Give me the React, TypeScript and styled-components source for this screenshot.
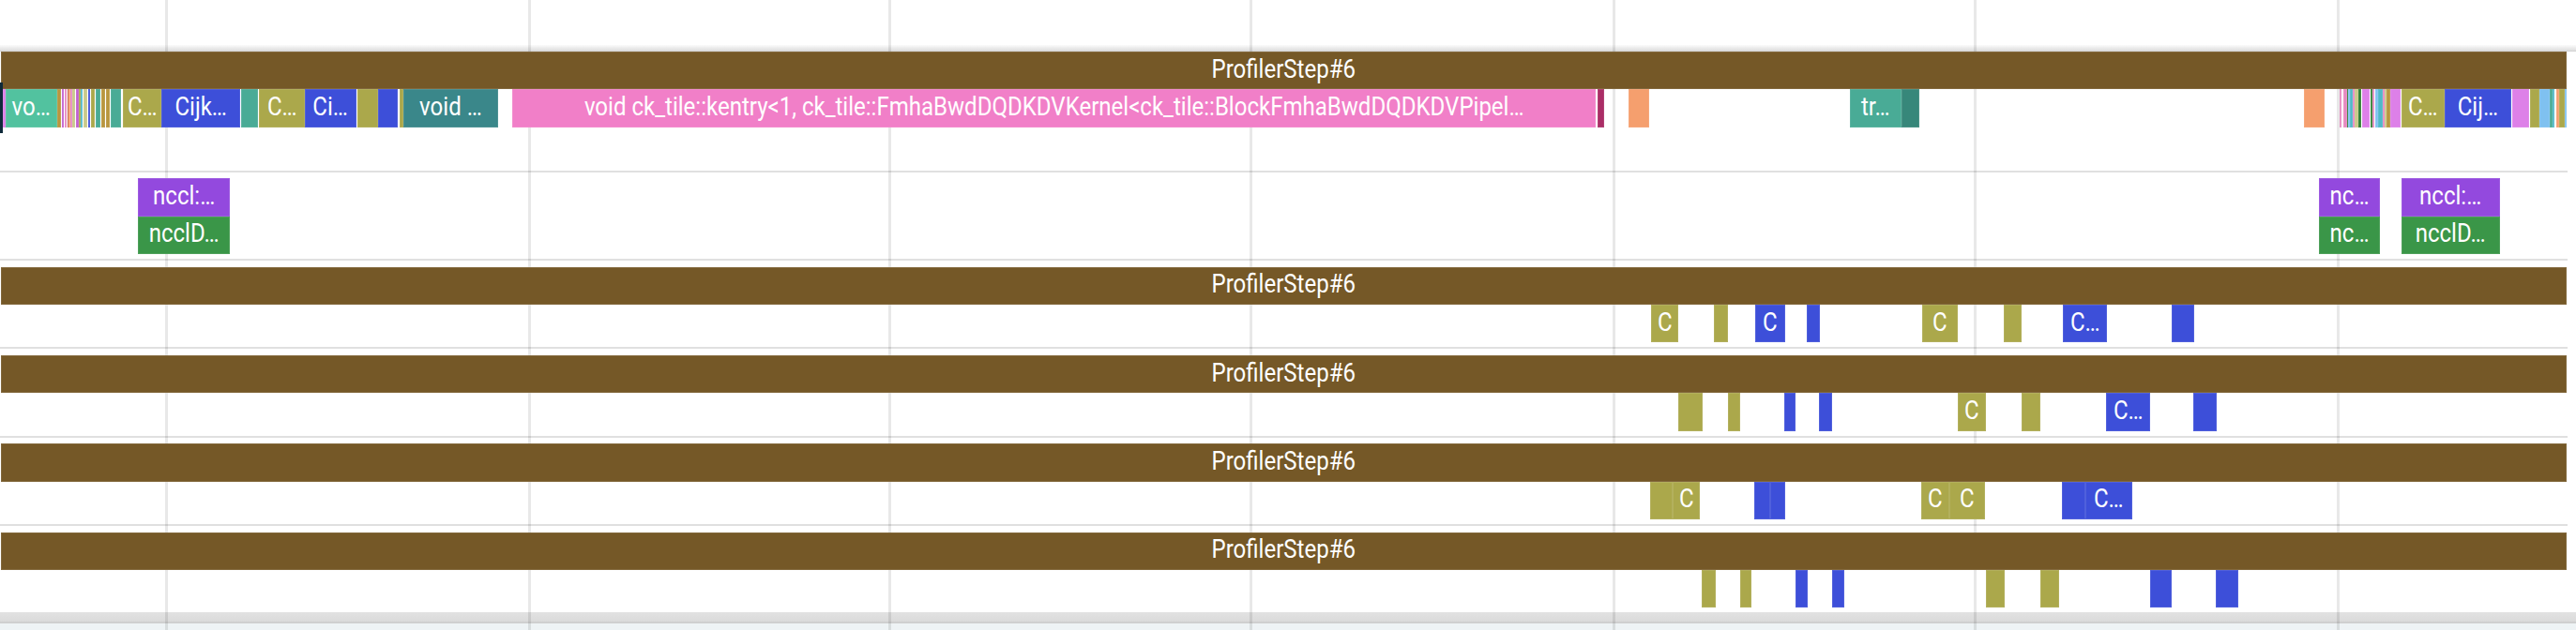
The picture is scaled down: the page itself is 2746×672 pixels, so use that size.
import React from 'react'
import { createGlobalStyle, styled } from 'styled-components'

const colors = {
  brown: '#755827',
  olive: '#aba84b',
  blue: '#3d4fd9',
  teal: '#49ab96',
  mint: '#52c29f',
  deepTeal: '#3a878a',
  darkTeal: '#37877a',
  pink: '#f17fc8',
  orchid: '#dd80e8',
  magenta: '#c25fd0',
  maroon: '#aa2d66',
  orange: '#f59f6e',
  tan: '#b8963f',
  sky: '#7fc1f0',
  cyan: '#50b8c8',
  forest: '#2e7d32',
  purple: '#9349de',
  green: '#3a9648',
  rose: '#e68ac0',
  navy: '#0f2a3a',
  red: '#c0563f',
  pale: '#c9c98a',
}

type SliceData = [left: number, right: number, color: string, label?: string]

const GlobalStyle = createGlobalStyle`
  html, body {
    margin: 0;
    padding: 0;
    height: 100%;
    overflow: hidden;
    background: #fff;
  }
`

const Page = styled.div`
  position: relative;
  width: 2746px;
  height: 672px;
  overflow: hidden;
  font-family: Roboto, 'Liberation Sans', sans-serif;
  color: #fff;
  background: #fff;
`

// vertical time markers, they run behind the slices
const GridLine = styled.div.attrs<{ $x: number }>((p) => ({
  style: { left: p.$x },
}))<{ $x: number }>`
  position: absolute;
  top: 0;
  bottom: 0;
  width: 3px;
  background: rgba(0, 0, 0, 0.09);
  z-index: 2;
`

const TopGutter = styled.div`
  height: 48px;
`

const TopShadow = styled.div`
  height: 7px;
  background: linear-gradient(#fbfbfb, #dedede);
  border-bottom: 1px solid #d4d4d4;
  box-sizing: border-box;
`

const Track = styled.section<{ $extra?: number }>`
  width: 2737px;
  padding-top: 6.67px;
  padding-bottom: ${(p) => 5 + (p.$extra ?? 0)}px;
  border-bottom: 2px solid #e0e0e0;

  &:first-of-type {
    padding-top: 0;
  }

  &:last-of-type {
    border-bottom: 0;
  }
`

const Row = styled.div`
  position: relative;
  height: 40.33px;
  z-index: 3;
`

const Slice = styled.div.attrs<{ $left: number; $right: number }>((p) => ({
  style: { left: p.$left, width: p.$right - p.$left },
}))<{ $left: number; $right: number; $color: string }>`
  position: absolute;
  top: 0;
  bottom: 0;
  box-sizing: border-box;
  display: flex;
  align-items: center;
  justify-content: center;
  overflow: hidden;
  white-space: pre;
  background: ${(p) => p.$color};
  box-shadow: inset 0 0 0 1px rgba(255, 255, 255, 0.1);
`

// the trace viewer canvas draws its labels slightly squeezed
const SliceLabel = styled.span`
  flex: none;
  font-size: 27px;
  line-height: 1;
  transform: translateY(-1px) scaleX(0.89);
`

const Marker = styled.div`
  position: absolute;
  left: 0;
  top: 88px;
  width: 3px;
  height: 54px;
  background: ${colors.navy};
  z-index: 4;
`

const BottomShadow = styled.div`
  height: 10px;
  background: linear-gradient(#e2e2e2, #dadada);
`

const BottomLine = styled.div`
  height: 2px;
  background: #cfcfcf;
`

const Footer = styled.div`
  height: 7px;
  background: #eef3f5;
`

const gridLines = [176, 563, 947, 1332, 1719, 2104, 2491]

const mainRow: SliceData[] = [
  [3, 6, colors.orchid],
  [6, 61, colors.mint, 'vo…'],
  [61, 65, colors.tan],
  [66, 68, colors.magenta],
  [69, 71, colors.rose],
  [71.5, 73, colors.red],
  [73, 75, colors.orange],
  [75, 76.5, colors.rose],
  [77, 80, colors.pale],
  [80.5, 84, colors.magenta],
  [84, 86, colors.olive],
  [86, 88, colors.cyan],
  [88.5, 93, colors.pale],
  [93.5, 96, colors.blue],
  [97, 101, colors.olive],
  [102, 107, colors.teal],
  [108, 112, colors.tan],
  [112.5, 116.5, colors.tan],
  [118, 128.5, colors.teal],
  [131, 172, colors.olive, 'C…'],
  [172, 256, colors.blue, 'Cijk…'],
  [257, 275, colors.teal],
  [276, 325, colors.olive, 'C…'],
  [325, 380, colors.blue, 'Ci…'],
  [381, 403, colors.olive],
  [403, 424, colors.blue],
  [426, 430, colors.olive],
  [430, 531, colors.deepTeal, 'void …'],
  [546, 1701, colors.pink, 'void ck_tile::kentry<1, ck_tile::FmhaBwdDQDKDVKernel<ck_tile::BlockFmhaBwdDQDKDVPipel…'],
  [1703, 1710, colors.maroon],
  [1736, 1758, colors.orange],
  [1972, 2027, colors.teal, 'tr…'],
  [2027, 2046, colors.darkTeal],
  [2456, 2478, colors.orange],
  [2494, 2495.5, colors.rose],
  [2498, 2502, colors.rose],
  [2502, 2503, colors.forest],
  [2503, 2505, colors.sky],
  [2505, 2508, colors.cyan],
  [2508, 2510, colors.rose],
  [2510, 2513.5, colors.pale],
  [2514, 2517, colors.forest],
  [2518, 2526, colors.orchid],
  [2527, 2529, colors.forest],
  [2529, 2531, colors.rose],
  [2531.5, 2535, colors.sky],
  [2535, 2540, colors.cyan],
  [2540, 2541.5, colors.rose],
  [2541.5, 2544, colors.pale],
  [2544, 2548, colors.tan],
  [2548, 2559, colors.orchid],
  [2560, 2606, colors.olive, 'C…'],
  [2606, 2677, colors.blue, 'Cij…'],
  [2678, 2696, colors.orchid],
  [2697, 2707, colors.olive],
  [2707, 2718, colors.sky],
  [2718, 2721, colors.teal],
  [2721, 2723, colors.cyan],
  [2725, 2728, colors.orange],
  [2728, 2734, colors.olive],
  [2734, 2736, colors.sky],
]

const purpleRow: SliceData[] = [
  [147, 245, colors.purple, 'nccl:…'],
  [2472, 2537, colors.purple, 'nc…'],
  [2560, 2665, colors.purple, 'nccl:…'],
]

const greenRow: SliceData[] = [
  [147, 245, colors.green, 'ncclD…'],
  [2472, 2537, colors.green, 'nc…'],
  [2560, 2665, colors.green, 'ncclD…'],
]

const workerRows: SliceData[][] = [
  [
    [1760, 1789, colors.olive, 'C'],
    [1827, 1841.5, colors.olive],
    [1870.5, 1903, colors.blue, 'C'],
    [1926, 1940, colors.blue],
    [2049, 2087, colors.olive, 'C'],
    [2136, 2155, colors.olive],
    [2199, 2246, colors.blue, 'C…'],
    [2315, 2339, colors.blue],
  ],
  [
    [1789, 1815, colors.olive],
    [1841.5, 1855, colors.olive],
    [1902, 1914, colors.blue],
    [1939, 1953, colors.blue],
    [2087, 2117, colors.olive, 'C'],
    [2155, 2175, colors.olive],
    [2245, 2292, colors.blue, 'C…'],
    [2338, 2362.5, colors.blue],
  ],
  [
    [1759, 1782.6, colors.olive],
    [1782.6, 1812, colors.olive, 'C'],
    [1870, 1886.6, colors.blue],
    [1886.6, 1903, colors.blue],
    [2048, 2078, colors.olive, 'C'],
    [2078, 2115.6, colors.olive, 'C'],
    [2198, 2223, colors.blue],
    [2223, 2273, colors.blue, 'C…'],
  ],
  [
    [1814, 1828.6, colors.olive],
    [1855, 1867, colors.olive],
    [1914, 1927, colors.blue],
    [1953, 1966, colors.blue],
    [2117, 2137, colors.olive],
    [2175, 2195, colors.olive],
    [2291.5, 2315, colors.blue],
    [2362, 2386, colors.blue],
  ],
]

const Slices: React.FC<{ items: SliceData[] }> = ({ items }) => (
  <Row>
    {items.map(([left, right, color, label]) => (
      <Slice key={left} $left={left} $right={right} $color={color}>
        {label && <SliceLabel>{label}</SliceLabel>}
      </Slice>
    ))}
  </Row>
)

const stepRow: SliceData[] = [[1, 2736, colors.brown, 'ProfilerStep#6']]

export default function App() {
  return (
    <Page>
      <GlobalStyle />
      {gridLines.map((x) => (
        <GridLine key={x} $x={x} />
      ))}
      <Marker />
      <TopGutter />
      <TopShadow />
      <Track $extra={41}>
        <Slices items={stepRow} />
        <Slices items={mainRow} />
      </Track>
      <Track>
        <Slices items={purpleRow} />
        <Slices items={greenRow} />
      </Track>
      {workerRows.map((row, i) => (
        <Track key={i}>
          <Slices items={stepRow} />
          <Slices items={row} />
        </Track>
      ))}
      <BottomShadow />
      <BottomLine />
      <Footer />
    </Page>
  )
}
